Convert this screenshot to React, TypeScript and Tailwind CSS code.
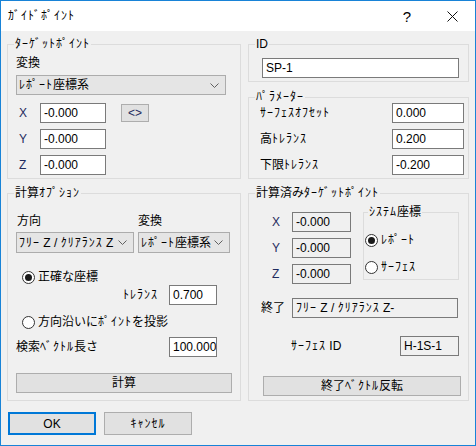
import type { ReactNode } from 'react';

// Windows-style "guide point" dialog

// half-width katakana renders narrower than the original UI font, so space it out a bit
function k(text: string): ReactNode {
  return text.split(/([\uFF61-\uFF9F]+)/).map((part, i) =>
    /[\uFF61-\uFF9F]/.test(part) ? (
      <span key={i} className="tracking-[1px]">
        {part}
      </span>
    ) : (
      part
    )
  );
}

function GroupBox({ title, className, children }: { title: string; className: string; children: ReactNode }) {
  return (
    <fieldset className={`border border-[#dcdcdc] ${className}`}>
      <legend className="ml-[6px] px-[1px] text-[12px] leading-[14px] whitespace-nowrap">{k(title)}</legend>
      {children}
    </fieldset>
  );
}

function TextBox({ value, className = '', gray = false }: { value: string; className?: string; gray?: boolean }) {
  return (
    <div
      className={`h-[20px] border border-[#7a7a7a] pl-[3px] text-[12px] leading-[18px] whitespace-nowrap overflow-hidden ${gray ? 'bg-[#f0f0f0]' : 'bg-white'} ${className}`}
    >
      {k(value)}
    </div>
  );
}

function Select({ value, className }: { value: string; className: string }) {
  return (
    <div className={`flex items-center border border-[#acacac] bg-[#e5e5e5] pl-[2px] pr-[6px] text-[12px] ${className}`}>
      <span className="flex-1 whitespace-nowrap overflow-hidden">{k(value)}</span>
      <svg width="9" height="5" viewBox="0 0 9 5" className="shrink-0">
        <path d="M0.5 0.5 L4.5 4.5 L8.5 0.5" fill="none" stroke="#606060" strokeWidth="1" />
      </svg>
    </div>
  );
}

function Radio({ checked, label }: { checked?: boolean; label: string }) {
  return (
    <div className="flex items-center h-[16px]">
      <span className="w-[13px] h-[13px] rounded-full border border-[#333333] bg-white flex items-center justify-center shrink-0">
        {checked && <span className="w-[7px] h-[7px] rounded-full bg-[#1a1a1a]" />}
      </span>
      <span className="ml-[3px] text-[12px] leading-[14px] whitespace-nowrap">{k(label)}</span>
    </div>
  );
}

function Button({ label, className }: { label: string; className: string }) {
  return (
    <div className={`flex items-center justify-center bg-[#e1e1e1] text-[12px] ${className}`}>
      {k(label)}
    </div>
  );
}

function AxisRow({ axis, value, children }: { axis: string; value: string; children?: ReactNode }) {
  return (
    <div className="flex items-center h-[20px]">
      <span className="w-[24px] pl-[3px] text-[12px] text-[#1f2b5e]">{axis}</span>
      <TextBox value={value} className="w-[66px]" />
      {children}
    </div>
  );
}

export default function App() {
  return (
    <div className="w-[476px] h-[446px] border border-[#1883d7] bg-[#f0f0f0] flex flex-col text-black font-['Liberation_Sans','Noto_Sans_CJK_JP',sans-serif]">
      {/* Title bar */}
      <div className="h-[30px] bg-white flex items-center shrink-0">
        <span className="ml-[7px] text-[12px]">{k('ｶﾞｲﾄﾞﾎﾟｲﾝﾄ')}</span>
        <span className="ml-auto text-[15px] leading-none">?</span>
        <svg width="11" height="11" viewBox="0 0 11 11" className="ml-[36px] mr-[17px]">
          <path d="M0.5 0.5 L10.5 10.5 M10.5 0.5 L0.5 10.5" stroke="#111" strokeWidth="1" />
        </svg>
      </div>

      <div className="px-[6px] pt-[6px] flex flex-col">
        {/* Top row */}
        <div className="flex gap-[7px]">
          <GroupBox title="ﾀｰｹﾞｯﾄﾎﾟｲﾝﾄ" className="w-[234px] h-[142px]">
            <div className="px-[8px] flex flex-col">
              <div className="mt-[5px] text-[12px] leading-[14px]">変換</div>
              <Select value="ﾚﾎﾟｰﾄ座標系" className="mt-[5px] w-[210px] h-[20px]" />
              <div className="mt-[8px] flex flex-col gap-[6px]">
                <AxisRow axis="X" value="-0.000">
                  <Button label="<>" className="ml-[15px] w-[28px] h-[18px] border border-[#adadad] text-[#1f2b5e]" />
                </AxisRow>
                <AxisRow axis="Y" value="-0.000" />
                <AxisRow axis="Z" value="-0.000" />
              </div>
            </div>
          </GroupBox>

          <div className="w-[221px] flex flex-col">
            <GroupBox title="ID" className="h-[45px]">
              <div className="pl-[13px] pt-[7px]">
                <TextBox value="SP-1" className="w-[197px]" />
              </div>
            </GroupBox>
            <GroupBox title="ﾊﾟﾗﾒｰﾀｰ" className="mt-[8px] h-[89px]">
              <div className="-mt-[1px] pl-[11px] pr-[4px] flex flex-col gap-[6px]">
                {[
                  ['ｻｰﾌｪｽｵﾌｾｯﾄ', '0.000'],
                  ['高ﾄﾚﾗﾝｽ', '0.200'],
                  ['下限ﾄﾚﾗﾝｽ', '-0.200'],
                ].map(([label, value]) => (
                  <div key={label} className="flex items-center h-[20px]">
                    <span className="w-[132px] text-[12px] whitespace-nowrap">{k(label)}</span>
                    <TextBox value={value} className="w-[72px]" />
                  </div>
                ))}
              </div>
            </GroupBox>
          </div>
        </div>

        {/* Bottom row */}
        <div className="mt-[7px] flex gap-[7px]">
          <GroupBox title="計算ｵﾌﾟｼｮﾝ" className="w-[234px] h-[215px]">
            <div className="px-[8px] flex flex-col">
              <div className="mt-[14px] flex text-[12px] leading-[14px]">
                <span className="w-[122px] pl-[1px]">方向</span>
                <span>変換</span>
              </div>
              <div className="mt-[4px] flex">
                <Select value="ﾌﾘｰ Z / ｸﾘｱﾗﾝｽ Z" className="w-[118px] h-[21px]" />
                <Select value="ﾚﾎﾟｰﾄ座標系" className="ml-[4px] w-[92px] h-[21px]" />
              </div>
              <div className="mt-[16px] ml-[6px]">
                <Radio checked label="正確な座標" />
              </div>
              <div className="flex items-center h-[20px]">
                <span className="w-[153px] pl-[107px] text-[12px] whitespace-nowrap">{k('ﾄﾚﾗﾝｽ')}</span>
                <TextBox value="0.700" className="w-[48px]" />
              </div>
              <div className="mt-[9px] ml-[6px]">
                <Radio label="方向沿いにﾎﾟｲﾝﾄを投影" />
              </div>
              <div className="mt-[7px] flex items-center h-[20px]">
                <span className="w-[153px] text-[12px] whitespace-nowrap">{k('検索ﾍﾞｸﾄﾙ長さ')}</span>
                <TextBox value="100.000" className="w-[48px]" />
              </div>
              <Button label="計算" className="mt-[16px] w-[216px] h-[20px] border border-[#adadad]" />
            </div>
          </GroupBox>

          <GroupBox title="計算済みﾀｰｹﾞｯﾄﾎﾟｲﾝﾄ" className="w-[221px] h-[215px]">
            <div className="flex flex-col">
              <div className="flex items-start">
                <div className="mt-[12px] flex flex-col gap-[6px]">
                  {['X', 'Y', 'Z'].map((axis) => (
                    <div key={axis} className="flex items-center h-[20px]">
                      <span className="w-[43px] pl-[23px] text-[12px] text-[#1f2b5e]">{axis}</span>
                      <TextBox value="-0.000" gray className="w-[59px]" />
                    </div>
                  ))}
                </div>
                <fieldset className="ml-[12px] mt-[5px] w-[96px] h-[75px] border border-[#dcdcdc]">
                  <legend className="ml-[4px] px-[1px] text-[12px] leading-[14px] whitespace-nowrap">{k('ｼｽﾃﾑ座標')}</legend>
                  <div className="mt-[13px] ml-[1px]">
                    <Radio checked label="ﾚﾎﾟｰﾄ" />
                  </div>
                  <div className="mt-[11px] ml-[1px]">
                    <Radio label="ｻｰﾌｪｽ" />
                  </div>
                </fieldset>
              </div>
              <div className="mt-[14px] flex items-center h-[20px]">
                <span className="w-[43px] pl-[12px] text-[12px]">終了</span>
                <TextBox value="ﾌﾘｰ Z / ｸﾘｱﾗﾝｽ Z-" gray className="w-[166px]" />
              </div>
              <div className="mt-[18px] flex items-center h-[20px]">
                <span className="w-[151px] pl-[42px] text-[12px] whitespace-nowrap">{k('ｻｰﾌｪｽ ID')}</span>
                <TextBox value="H-1S-1" gray className="w-[59px]" />
              </div>
              <Button label="終了ﾍﾞｸﾄﾙ反転" className="mt-[20px] ml-[14px] w-[198px] h-[20px] border border-[#adadad]" />
            </div>
          </GroupBox>
        </div>

        {/* Dialog buttons */}
        <div className="mt-[11px] ml-[1px] flex gap-[8px]">
          <Button label="OK" className="w-[88px] h-[23px] border-2 border-[#0078d7]" />
          <Button label="ｷｬﾝｾﾙ" className="w-[88px] h-[23px] border border-[#adadad]" />
        </div>
      </div>
    </div>
  );
}
